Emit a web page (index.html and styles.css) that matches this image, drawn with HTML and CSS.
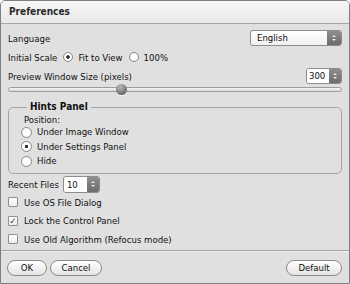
FILE: index.html
```html
<!DOCTYPE html>
<html lang="en">
<head>
  <meta charset="UTF-8" />
  <title>Preferences</title>
  <link rel="stylesheet" href="styles.css">
</head>
<body>
  <div class="window">
    <div class="titlebar">Preferences</div>
    <div class="content">
      <div class="row row-language">
        <span>Language</span>
        <div class="combo">
          <span class="combo-value">English</span>
          <span class="stepper"><i class="up"></i><i class="down"></i></span>
        </div>
      </div>

      <div class="row row-scale">
        <span>Initial Scale</span>
        <label class="radio checked">Fit to View</label>
        <label class="radio">100%</label>
      </div>

      <div class="row row-preview">
        <span>Preview Window Size (pixels)</span>
        <div class="spin">
          <span class="spin-value">300</span>
          <span class="stepper"><i class="up"></i><i class="down"></i></span>
        </div>
      </div>

      <div class="slider">
        <div class="track"></div>
        <div class="thumb"></div>
      </div>

      <fieldset class="hints">
        <legend>Hints Panel</legend>
        <div class="hint-label">Position:</div>
        <label class="radio">Under Image Window</label>
        <label class="radio checked">Under Settings Panel</label>
        <label class="radio">Hide</label>
      </fieldset>

      <div class="row row-recent">
        <span>Recent Files</span>
        <div class="spin spin-recent">
          <span class="spin-value">10</span>
          <span class="stepper"><i class="up"></i><i class="down"></i></span>
        </div>
      </div>

      <label class="check">Use OS File Dialog</label>
      <label class="check checked">Lock the Control Panel</label>
      <label class="check">Use Old Algorithm (Refocus mode)</label>
    </div>

    <div class="footer">
      <button class="pill pill-ok">OK</button>
      <button class="pill pill-cancel">Cancel</button>
      <button class="pill pill-default">Default</button>
    </div>
  </div>
</body>
</html>
```

FILE: styles.css
```css
body {
  margin: 0;
  background: #fff;
  font-family: 'DejaVu Sans Condensed', 'DejaVu Sans', sans-serif;
  font-size: 9.5px;
  color: #111;
}

.window {
  width: 350px;
  height: 284px;
  box-sizing: border-box;
  border: 1px solid #7e7e7e;
  border-radius: 5px 5px 0 0;
  background: #e0e0e0;
  display: flex;
  flex-direction: column;
  overflow: hidden;
}

.titlebar {
  height: 22px;
  line-height: 22px;
  padding-left: 8px;
  font-weight: bold;
  font-size: 10px;
  color: #2a2a2a;
  background: linear-gradient(#f6f6f6, #e9e9e9);
  border-bottom: 1px solid #a6a6a6;
}

.content {
  padding: 0 7px 0 7px;
  display: flex;
  flex-direction: column;
}

.row {
  display: flex;
  align-items: center;
  height: 16px;
}

.row-language {
  margin-top: 6px;
  justify-content: space-between;
}

.row-scale {
  margin-top: 3px;
}

.row-preview {
  margin-top: 3px;
  justify-content: space-between;
}

/* combo box + spinners */
.combo,
.spin {
  display: flex;
  height: 14px;
  border: 1px solid #8c8c8c;
  border-radius: 3px;
  background: linear-gradient(#ffffff, #f0f0f0);
  overflow: hidden;
}

.combo {
  width: 90px;
}

.combo-value,
.spin-value {
  flex: 1;
  padding-left: 6px;
  line-height: 14px;
}

.spin {
  width: 34px;
}

.spin-value {
  padding-left: 2px;
  background: #fff;
}

.spin-recent {
  width: 35px;
  height: 15px;
  margin-left: 4px;
}

.spin-recent .spin-value {
  padding-left: 3px;
  line-height: 15px;
}

.stepper {
  width: 12px;
  background: linear-gradient(#8e8e8e, #6c6c6c);
  display: flex;
  flex-direction: column;
  align-items: center;
  justify-content: center;
  gap: 2px;
}

.combo .stepper {
  width: 14px;
}

.stepper i {
  width: 0;
  height: 0;
  border-left: 2px solid transparent;
  border-right: 2px solid transparent;
}

.stepper .up {
  border-bottom: 2px solid #e8e8e8;
}

.stepper .down {
  border-top: 2px solid #e8e8e8;
}

/* radios */
.radio {
  display: flex;
  align-items: center;
  gap: 5px;
}

.radio::before {
  content: "";
  width: 8px;
  height: 8px;
  border: 1px solid #8a8a8a;
  border-radius: 50%;
  background: radial-gradient(circle, #ffffff 50%, #e6e6e6);
}

.radio.checked::before {
  background: radial-gradient(circle, #333 0 1.5px, #fff 2px, #fff 55%, #e6e6e6);
}

.row-scale span {
  margin-right: 6px;
}

.row-scale .radio + .radio {
  margin-left: 6px;
}

/* slider */
.slider {
  position: relative;
  height: 11px;
}

.track {
  margin-top: 3px;
  height: 3px;
  border: 1px solid #9c9c9c;
  border-radius: 3px;
  background: linear-gradient(#f4f4f4, #d8d8d8);
}

.thumb {
  position: absolute;
  left: 108px;
  top: 0;
  width: 11px;
  height: 11px;
  border-radius: 50%;
  background: radial-gradient(circle at 40% 30%, #b8b8b8, #6e6e6e 70%);
  box-shadow: 0 1px 0 rgba(255, 255, 255, 0.6);
}

/* hints panel */
.hints {
  margin: 7px 0 0 0;
  padding: 0 0 4px 12px;
  border: 1px solid #a4a4a4;
  border-radius: 5px;
  display: flex;
  flex-direction: column;
}

.hints legend {
  font-weight: bold;
  font-size: 10px;
  padding: 0 3px;
  margin-left: 6px;
  line-height: 10px;
}

.hint-label {
  margin-left: 3px;
  margin-top: 2px;
  height: 11px;
  line-height: 11px;
}

.hints .radio {
  height: 14.5px;
  line-height: 12px;
}

.hints .radio::before {
  width: 9px;
  height: 9px;
}

.row-recent {
  margin-top: 2px;
  height: 17px;
}

/* checkboxes */
.check {
  display: flex;
  align-items: center;
  gap: 6px;
  height: 17px;
  margin-top: 1.5px;
}

.check:first-of-type {
  margin-top: 1px;
}

.check::before {
  content: "";
  width: 8px;
  height: 8px;
  border: 1px solid #8e8e8e;
  border-radius: 1px;
  background: linear-gradient(#ffffff, #ececec);
  font-size: 9px;
  line-height: 8px;
  text-align: center;
  color: #333;
}

.check.checked::before {
  content: "✓";
}

/* footer buttons */
.footer {
  margin-top: auto;
  height: 33px;
  box-sizing: border-box;
  border-top: 1px solid #a2a2a2;
  box-shadow: inset 0 1px 0 #f2f2f2;
  display: flex;
  align-items: center;
  gap: 3px;
  padding: 1px 7px 0 6px;
}

.pill {
  height: 16px;
  border: 1px solid #8a8a8a;
  border-radius: 8px;
  background: linear-gradient(#ffffff, #e4e4e4);
  font-family: inherit;
  font-size: 9.5px;
  color: #111;
  padding: 0;
  cursor: pointer;
}

.pill-ok {
  width: 40px;
}

.pill-cancel {
  width: 52px;
}

.pill-default {
  width: 56px;
  margin-left: auto;
}
```
